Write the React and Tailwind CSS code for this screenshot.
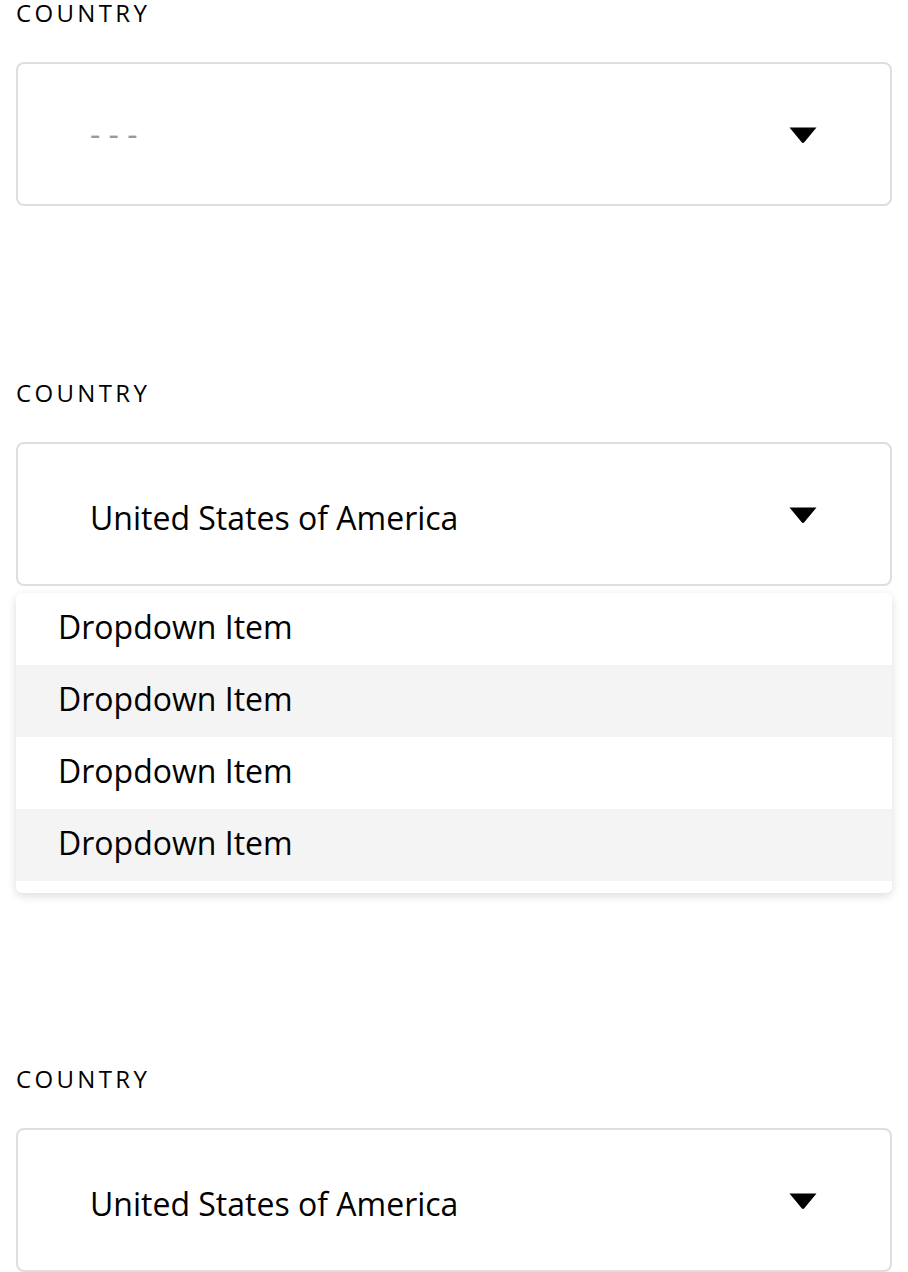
const font = { fontFamily: '"Open Sans", "Noto Sans", sans-serif' };

function Caret() {
    return (
        <svg width="28" height="17" viewBox="0 0 28 17" className="shrink-0">
            <path d="M0.5 0.5 H27.5 L15.3 15.2 Q14 16.8 12.7 15.2 Z" fill="#000" />
        </svg>
    );
}

function Field({ value, placeholder }) {
    return (
        <div>
            <p className="text-[24px] leading-[26px] tracking-[0.14em] text-black">COUNTRY</p>
            <div className="mt-[36px] flex h-[144px] items-center rounded-[8px] border-2 border-[#dedede] bg-white pl-[72px] pr-[73px]">
                {value ? (
                    <span className="flex-1 pt-[7px] text-[32px] leading-[44px] text-black">{value}</span>
                ) : (
                    <span className="flex-1 text-[32px] leading-[44px] text-[#9a9a9a]">{placeholder}</span>
                )}
                <div className="pt-[2px]">
                    <Caret />
                </div>
            </div>
        </div>
    );
}

export default function App() {
    const items = ["Dropdown Item", "Dropdown Item", "Dropdown Item", "Dropdown Item"];

    return (
        <div className="min-h-[1272px] bg-white px-4" style={font}>
            <Field placeholder="- - -" />

            <div className="mt-[174px]">
                <Field value="United States of America" />
                <div className="mt-[7px] overflow-hidden rounded-[6px] bg-white pb-[12px] shadow-[0_3px_10px_rgba(0,0,0,0.14)]">
                    {items.map((item, i) => (
                        <div
                            key={i}
                            className={`h-[72px] pl-[42px] text-[32px] leading-[68px] text-black ${i % 2 === 1 ? "bg-[#f4f4f4]" : "bg-white"}`}
                        >
                            {item}
                        </div>
                    ))}
                </div>
            </div>

            <div className="mt-[173px]">
                <Field value="United States of America" />
            </div>
        </div>
    );
}
